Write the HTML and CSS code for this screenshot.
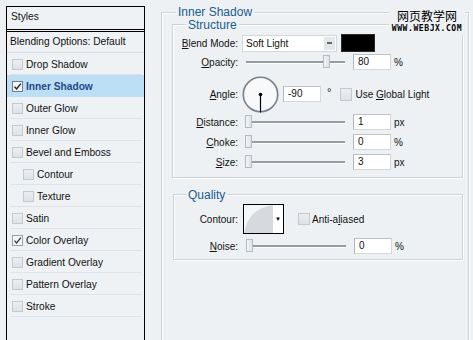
FILE: index.html
```html
<!DOCTYPE html>
<html lang="en">
<head>
<meta charset="utf-8">
<title>Layer Style – Inner Shadow</title>
<link rel="stylesheet" href="styles.css">
</head>
<body>
<div class="dialog">
  <aside class="styles-panel">
    <div class="panel-head">Styles</div>
    <div class="panel-blend">Blending Options: Default</div>
    <ul class="style-list">
      <li class="item"><span class="cb"></span>Drop Shadow</li>
      <li class="item active"><span class="cb checked"><svg viewBox="0 0 9 9" width="9" height="9"><path d="M1.5 4.6 L3.6 7 L7.8 1.6" fill="none" stroke="#1e1e1e" stroke-width="1.4"/></svg></span>Inner Shadow</li>
      <li class="item"><span class="cb"></span>Outer Glow</li>
      <li class="item"><span class="cb"></span>Inner Glow</li>
      <li class="item"><span class="cb"></span>Bevel and Emboss</li>
      <li class="item sub"><span class="cb"></span>Contour</li>
      <li class="item sub"><span class="cb"></span>Texture</li>
      <li class="item"><span class="cb"></span>Satin</li>
      <li class="item"><span class="cb checked"><svg viewBox="0 0 9 9" width="9" height="9"><path d="M1.5 4.6 L3.6 7 L7.8 1.6" fill="none" stroke="#3a3a3a" stroke-width="1.3"/></svg></span>Color Overlay</li>
      <li class="item"><span class="cb"></span>Gradient Overlay</li>
      <li class="item"><span class="cb"></span>Pattern Overlay</li>
      <li class="item"><span class="cb"></span>Stroke</li>
    </ul>
  </aside>

  <main class="settings">
    <section class="group outer">
      <div class="group-title outer-title">Inner Shadow</div>

      <section class="group structure">
        <div class="group-title inner-title">Structure</div>

        <div class="row row-blend">
          <span class="label"><u>B</u>lend Mode:</span>
          <div class="select">
            <span class="select-text">Soft Light</span>
            <span class="select-btn"><span class="dash"></span></span>
          </div>
          <span class="swatch"></span>
        </div>

        <div class="row row-opacity">
          <span class="label"><u>O</u>pacity:</span>
          <div class="slider"><span class="track"></span><span class="thumb" style="left:81px"></span></div>
          <span class="num">80</span><span class="unit">%</span>
        </div>

        <div class="row row-angle">
          <span class="label"><u>A</u>ngle:</span>
          <svg class="dial" viewBox="0 0 37 37" width="37" height="37">
            <circle cx="18.5" cy="18.5" r="17.2" fill="#f7f9fb" stroke="#76818c" stroke-width="1.6"/>
            <line x1="18.5" y1="18.5" x2="18.5" y2="36.5" stroke="#000" stroke-width="1.2"/>
            <circle cx="18.5" cy="18.5" r="1.8" fill="#000"/>
          </svg>
          <span class="num num-angle">-90</span>
          <span class="deg">°</span>
          <span class="cb cb-lg"></span>
          <span class="cb-text">Use <u>G</u>lobal Light</span>
        </div>

        <div class="row row-distance">
          <span class="label"><u>D</u>istance:</span>
          <div class="slider"><span class="track"></span><span class="thumb" style="left:3px"></span></div>
          <span class="num">1</span><span class="unit">px</span>
        </div>

        <div class="row row-gap">
          <span class="label"><u>C</u>hoke:</span>
          <div class="slider"><span class="track"></span><span class="thumb" style="left:3px"></span></div>
          <span class="num">0</span><span class="unit">%</span>
        </div>

        <div class="row row-gap">
          <span class="label"><u>S</u>ize:</span>
          <div class="slider"><span class="track"></span><span class="thumb" style="left:3px"></span></div>
          <span class="num">3</span><span class="unit">px</span>
        </div>
      </section>

      <section class="group quality">
        <div class="group-title inner-title q-title">Quality</div>

        <div class="row row-contour">
          <span class="label q-label">Contour:</span>
          <div class="contour">
            <svg class="contour-preview" viewBox="0 0 29 28" width="29" height="28">
              <rect width="29" height="28" fill="#f4f6f8"/>
              <path d="M0 28 Q4 4 29 0 L29 28 Z" fill="#d6dade"/>
            </svg>
            <span class="contour-btn">▼</span>
          </div>
          <span class="cb cb-aa"></span>
          <span class="cb-text">Anti-a<u>l</u>iased</span>
        </div>

        <div class="row row-noise">
          <span class="label q-label"><u>N</u>oise:</span>
          <div class="slider"><span class="track"></span><span class="thumb" style="left:3px"></span></div>
          <span class="num">0</span><span class="unit">%</span>
        </div>
      </section>
    </section>
  </main>

  <div class="watermark">
    <div class="wm-cn">网页教学网</div>
    <div class="wm-en">WWW.WEBJX.COM</div>
  </div>
</div>
</body>
</html>
```

FILE: styles.css
```css
* { box-sizing: border-box; }

html, body { margin: 0; }

body {
  width: 473px;
  height: 340px;
  overflow: hidden;
  background: #edf1f4;
  font-family: "Liberation Sans", Arial, sans-serif;
  font-size: 10px;
  color: #111;
}

u { text-decoration: underline; text-underline-offset: 1px; }

.dialog {
  position: relative;
  display: flex;
  align-items: flex-start;
  padding: 6px 0 0 6px;
  height: 340px;
  overflow: hidden;
}

/* ---------- left styles list ---------- */
.styles-panel {
  flex: none;
  width: 139px;
  height: 334px;
  border: 1px solid #000;
  border-bottom: none;
  background: #eff2f5;
  font-size: 10.2px;
}

.panel-head {
  height: 25px;
  border-bottom: 3px double #000;
  padding-left: 4px;
  line-height: 19px;
}

.panel-blend {
  height: 21px;
  line-height: 20px;
  padding-left: 3px;
  border-bottom: 1px solid #d8dee4;
}

.style-list {
  list-style: none;
  margin: 0;
  padding: 0;
}

.item {
  position: relative;
  height: 22px;
  display: flex;
  align-items: center;
  gap: 3px;
  padding-left: 5px;
}

.item::after {
  content: "";
  position: absolute;
  left: 3px;
  right: 2px;
  bottom: 0;
  height: 1px;
  background: #dde3e8;
}

.item.sub { padding-left: 16px; }

.item.active {
  background: #bcdff6;
  color: #1f4a86;
  font-weight: bold;
}

.item.active::after { display: none; }

.cb {
  flex: none;
  width: 11px;
  height: 11px;
  border: 1px solid #c3c9cf;
  background: linear-gradient(#eceff2, #dde2e6);
  display: flex;
  align-items: center;
  justify-content: center;
}

.cb.checked {
  border-color: #98a0a8;
  background: #f3f5f7;
}

.active .cb.checked { border-color: #6f7e8c; }

/* ---------- right settings ---------- */
.settings {
  flex: none;
  width: 308px;
  margin: 6px 0 0 16px;
}

.group {
  border: 1px solid #cbd2d8;
  box-shadow: inset 1px 1px 0 #fff, 1px 1px 0 #fff;
}

.outer {
  height: 328px;
  border-bottom: none;
}

.group-title {
  width: fit-content;
  height: 14px;
  padding: 0 2px;
  background: #edf1f4;
  color: #1b5c8c;
  font-size: 12px;
  line-height: 14px;
}

.outer-title { margin: -8px 0 0 14px; }

.inner-title { margin: -7px 0 0 13px; }

.structure {
  margin: 5px 5px 0 10px;
  padding-bottom: 6px;
}

.quality {
  margin: 16px 5px 0 11px;
  padding-bottom: 4px;
}

.q-title { margin-left: 12px; }

.row {
  display: flex;
  align-items: center;
  height: 18px;
}

.row-blend { margin-top: 2px; }
.row-opacity { margin-top: 1px; }
.row-angle { margin-top: 4px; height: 38px; }
.row-gap { margin-top: 2px; }
.row-contour { margin-top: 2px; height: 30px; }
.row-noise { margin-top: 3px; }

.label {
  flex: none;
  width: 65px;
  margin-right: 4px;
  text-align: right;
  white-space: nowrap;
}

.q-label { width: 64px; margin-right: 5px; }

.select {
  flex: none;
  width: 95px;
  height: 17px;
  display: flex;
  align-items: center;
  padding-left: 3px;
  background: #fff;
  border: 1px solid #d3d8dd;
}

.select-text { flex: 1; }

.select-btn {
  width: 11px;
  height: 13px;
  margin-right: 1px;
  background: #e3e7eb;
  display: flex;
  align-items: center;
  justify-content: center;
}

.dash {
  width: 5px;
  height: 2px;
  background: #666;
}

.swatch {
  flex: none;
  width: 34px;
  height: 18px;
  margin-left: 4px;
  background: #000;
  border: 1px solid #2a2a2a;
}

.slider {
  position: relative;
  flex: none;
  width: 107px;
  height: 18px;
  display: flex;
  align-items: center;
  padding: 0 4px;
}

.track {
  flex: 1;
  height: 3px;
  background: #969da4;
  border-bottom: 1px solid #fff;
}

.thumb {
  position: absolute;
  top: 2px;
  width: 7px;
  height: 13px;
  background: linear-gradient(90deg, #f2f4f6, #dfe3e7);
  border: 1px solid #b4bbc2;
}

.num {
  flex: none;
  width: 38px;
  height: 16px;
  margin-left: 4px;
  padding-left: 4px;
  line-height: 14px;
  background: #fff;
  border: 1px solid #d3d8dc;
  border-left-color: #b0b7bd;
  border-top-color: #bcc2c8;
}

.unit { margin-left: 3px; }

.dial { flex: none; display: block; }

.num-angle { margin-left: 4px; }

.deg {
  margin-left: 6px;
  font-size: 11px;
  margin-top: -4px;
}

.cb-lg {
  width: 12px;
  height: 13px;
  margin-left: 9px;
}

.cb-text { margin-left: 3px; white-space: nowrap; }

.contour {
  flex: none;
  width: 41px;
  height: 30px;
  display: flex;
  border: 1px solid #000;
  background: #fff;
}

.contour-preview { display: block; }

.contour-btn {
  flex: 1;
  display: flex;
  align-items: center;
  justify-content: center;
  font-size: 6px;
  color: #000;
}

.cb-aa {
  width: 12px;
  height: 12px;
  margin-left: 14px;
}

.cb-aa + .cb-text { margin-left: 2px; }

/* ---------- watermark ---------- */
.watermark {
  position: absolute;
  left: 389px;
  top: 8px;
  width: 76px;
  padding: 1px 0 2px;
  background: #edf1f4;
  text-align: center;
  color: #000;
}

.wm-cn {
  font-family: "Noto Sans CJK SC", sans-serif;
  font-size: 12px;
  line-height: 14px;
}

.wm-en {
  margin-top: 2px;
  font-family: "DejaVu Sans Mono", monospace;
  font-weight: bold;
  font-size: 8px;
  line-height: 8px;
  letter-spacing: 0.6px;
}
```
